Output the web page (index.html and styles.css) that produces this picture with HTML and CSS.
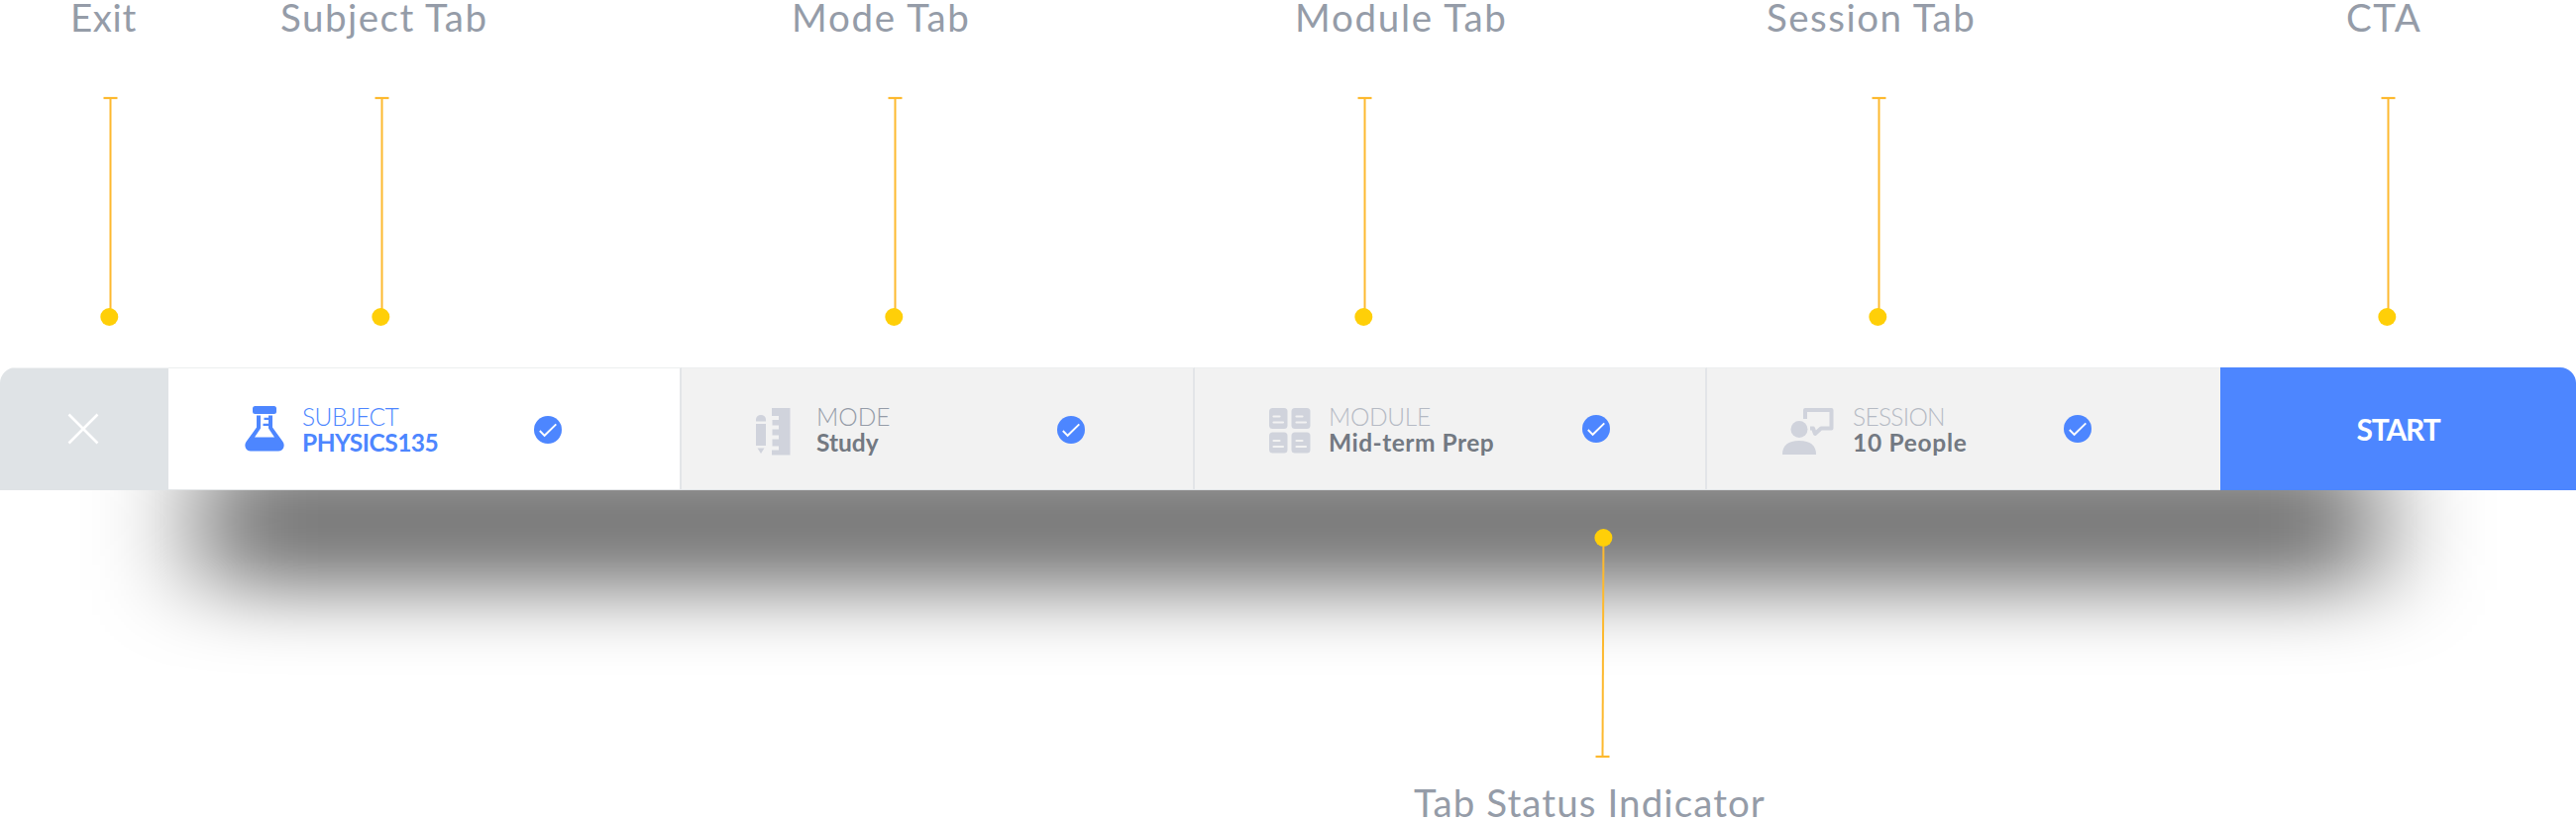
FILE: index.html
```html
<!DOCTYPE html>
<html lang="en">
<head>
<meta charset="utf-8">
<title>Session setup bar</title>
<link rel="stylesheet" href="styles.css">
</head>
<body>
<svg width="0" height="0" class="defs">
  <symbol id="stem" viewBox="0 0 20 234">
    <path d="M3.5 3h14" stroke="#fdb92f" stroke-width="2.2"/>
    <path d="M10.5 3v218" stroke="#fdb92f" stroke-width="2"/>
    <circle cx="9.3" cy="224" r="9" fill="#ffcf08"/>
  </symbol>
  <symbol id="check" viewBox="0 0 28 28">
    <circle cx="14" cy="14" r="14" fill="#4d86ff"/>
    <path d="M5.8 15l4.8 4.8L22.3 8.4" fill="none" stroke="#fff" stroke-width="1.9"/>
  </symbol>
</svg>
<main class="board">
  <section class="callouts">
    <div class="callout exit"><span class="label">Exit</span><svg class="stem"><use href="#stem"/></svg></div>
    <div class="callout subj"><span class="label">Subject Tab</span><svg class="stem"><use href="#stem"/></svg></div>
    <div class="callout mode"><span class="label">Mode Tab</span><svg class="stem"><use href="#stem"/></svg></div>
    <div class="callout modu"><span class="label">Module Tab</span><svg class="stem"><use href="#stem"/></svg></div>
    <div class="callout sess"><span class="label">Session Tab</span><svg class="stem"><use href="#stem"/></svg></div>
    <div class="callout cta"><span class="label">CTA</span><svg class="stem"><use href="#stem"/></svg></div>
  </section>

  <nav class="bar">
    <button class="close" aria-label="Exit">
      <svg width="32" height="32" viewBox="0 0 32 32"><path d="M1.5 1.5l29 29M30.5 1.5l-29 29" stroke="#fff" stroke-width="2.6"/></svg>
    </button>
    <div class="tab tab-subject">
      <svg class="icon" width="40" height="46" viewBox="0 0 40 46" fill="#4d86ff">
        <rect x="8" y="0" width="24" height="8" rx="2.5"/>
        <path fill-rule="evenodd" d="M12 9.500H28V21.500L38.500 36Q40.500 39 39 42.500Q37.500 45.500 34 45.500H6Q2.500 45.500 1 42.500Q-.5 39 1.500 36L12 21.500ZM16 9.500V22.500L10 31.500H30L24 22.500V20H18.500V17.800H24V14H19.500V11.800H24V9.500Z"/>
      </svg>
      <div class="text"><span class="kind k1">SUBJECT</span><strong class="value v1">PHYSICS135</strong></div>
      <svg class="check"><use href="#check"/></svg>
    </div>
    <div class="tab tab-mode">
      <svg class="icon" width="36" height="48" viewBox="0 0 36 48" fill="#d0d3dc">
        <path d="M0 13.500V11.500a5 4.500 0 0 1 10 0V13.500zM0 16h10v22H0zM1.500 40.500h7L5 46z"/>
        <path d="M16 0h18.500v47.500H16v-5h7v-4h-6.500v-7H23v-4h-6.500v-6H23v-4h-6.500v-5.500H23v-4h-7z"/>
      </svg>
      <div class="text"><span class="kind k2">MODE</span><strong class="value v2">Study</strong></div>
      <svg class="check"><use href="#check"/></svg>
    </div>
    <div class="tab tab-module">
      <svg class="icon" width="42" height="46" viewBox="0 0 42 46">
        <g fill="#d0d3dc"><rect width="18.500" height="21" rx="3.500"/><rect x="22.500" width="19" height="21" rx="3.500"/><rect y="24.500" width="18.500" height="21" rx="3.500"/><rect x="22.500" y="24.500" width="19" height="21" rx="3.500"/></g>
        <path d="M4.500 8.500h6M4.500 14.500h9.500M27.500 8.500h6M27.500 14.500h9.500M4.500 33h6M4.500 39h9.500M27.500 33h6M27.500 39h9.500" stroke="#f2f2f2" stroke-width="2.200" stroke-linecap="round"/>
      </svg>
      <div class="text"><span class="kind k3">MODULE</span><strong class="value v3">Mid-term Prep</strong></div>
      <svg class="check"><use href="#check"/></svg>
    </div>
    <div class="tab tab-session">
      <svg class="icon" width="52" height="48" viewBox="0 0 52 48" fill="#d0d3dc">
        <circle cx="17" cy="21.500" r="8.500"/>
        <path d="M0 47Q0 33 17 33T34 47z"/>
        <path d="M23 11V2H49.500V20.500H39L33 26L31 20.500H28" fill="none" stroke="#d0d3dc" stroke-width="4" stroke-linejoin="round"/>
      </svg>
      <div class="text"><span class="kind k4">SESSION</span><strong class="value v4">10 People</strong></div>
      <svg class="check"><use href="#check"/></svg>
    </div>
    <button class="start"><span>START</span></button>
  </nav>

  <svg class="shadow" width="2600" height="205" viewBox="0 0 2600 205">
    <defs><filter id="soft" filterUnits="userSpaceOnUse" x="0" y="-200" width="2600" height="500"><feGaussianBlur stdDeviation="52 37"/></filter></defs>
    <rect x="201" y="-39" width="2199" height="140" fill="#000" fill-opacity=".53" filter="url(#soft)"/>
  </svg>

  <section class="footnote">
    <svg class="stem-up" width="20" height="234" viewBox="0 0 20 234">
      <path d="M10.400 18L9.500 229" stroke="#fdb92f" stroke-width="2"/>
      <path d="M2.500 230h14" stroke="#fdb92f" stroke-width="2.200"/>
      <circle cx="10.400" cy="9" r="9" fill="#ffcf08"/>
    </svg>
    <span class="label status">Tab Status Indicator</span>
  </section>
</main>
</body>
</html>
```
FILE: styles.css
```css
* { box-sizing: border-box; }
body { margin: 0; background: #fff; font-family: Lato, "Open Sans", sans-serif; }
.defs { position: absolute; }
.board { position: relative; width: 2600px; height: 828px; overflow: hidden; display: flex; flex-direction: column; }

/* Callouts above the bar */
.callouts { height: 371px; flex: none; display: grid; grid-template-columns: 212px 516px 508px 476px 585px 1fr; padding-left: 71px; }
.callout { display: flex; flex-direction: column; }
.label { height: 34px; line-height: 34px; font-size: 38.5px; letter-spacing: var(--track, 0); color: #959ca8; white-space: nowrap; }
.stem { width: 20px; height: 234px; margin-top: 62px; margin-left: var(--shift); }
.exit { --shift: 30px; --track: .6px; }
.subj { --shift: 92px; --track: 1.5px; }
.mode { --shift: 94px; --track: 1.75px; }
.modu { --shift: 60px; --track: 1.75px; }
.sess { --shift: 103px; --track: 1.5px; }
.cta { --shift: 32px; --track: 1.5px; }

/* Bar */
.bar { position: relative; z-index: 1; flex: none; height: 124px; display: flex; border-radius: 16px 16px 0 0; overflow: hidden; }
button { border: 0; padding: 0; font: inherit; }
.close { width: 170px; background: #dfe3e6; border-top: 1px solid #f0f2f3; display: flex; align-items: center; justify-content: center; }
.close svg { margin-right: 2px; margin-top: -1px; }
.tab { display: flex; align-items: flex-start; background: #f2f2f2; border-top: 1px solid #eceeef; border-bottom: 1px solid #e3e6e8; border-right: 2px solid #e3e5e8; }
.tab-subject { width: 518px; background: #fff; padding-left: 77px; }
.tab-mode { width: 518px; padding-left: 75px; }
.tab-module { width: 517px; padding-left: 75px; }
.tab-session { width: 518px; padding-left: 76px; border-right: 0; }
.icon { flex: none; margin-top: 40px; }
.tab-subject .icon { margin-top: 38px; }
.text { display: flex; flex-direction: column; margin-top: 36px; white-space: nowrap; }
.kind, .value { height: 26px; line-height: 26px; font-size: 24.5px; }
.kind { font-weight: 300; color: #b5bac4; }
.value { font-weight: 700; color: #737982; }
.tab-subject .kind, .tab-subject .value { color: #4d86ff; }
.tab-mode .kind { color: #959ca8; }
.k1 { letter-spacing: -.5px; }
.k3 { letter-spacing: -.3px; }
.k4 { letter-spacing: -.7px; }
.v1 { letter-spacing: -.5px; }
.v3 { letter-spacing: .5px; }
.v4 { letter-spacing: .7px; }
.tab-subject .text { width: 234px; margin-left: 18px; }
.tab-mode .text { width: 243px; margin-left: 25px; }
.tab-module .text { width: 256px; margin-left: 18px; }
.tab-session .text { width: 213px; margin-left: 19px; }
.check { flex: none; width: 28px; height: 28px; margin-top: 47px; }
.tab-subject .check, .tab-mode .check { margin-top: 48px; }
.start { flex: 1; background: #4d86ff; color: #fff; font-weight: 700; font-size: 30px; letter-spacing: -1.2px; text-align: center; }

/* Drop shadow under the bar */
.shadow { position: absolute; left: 0; top: 495px; }

/* Callout below the bar */
.footnote { position: relative; z-index: 1; display: flex; flex-direction: column; padding: 39px 0 0 1427px; }
.stem-up { margin-left: 181px; }
.status { --track: 1.1px; margin-top: 25px; }
```
